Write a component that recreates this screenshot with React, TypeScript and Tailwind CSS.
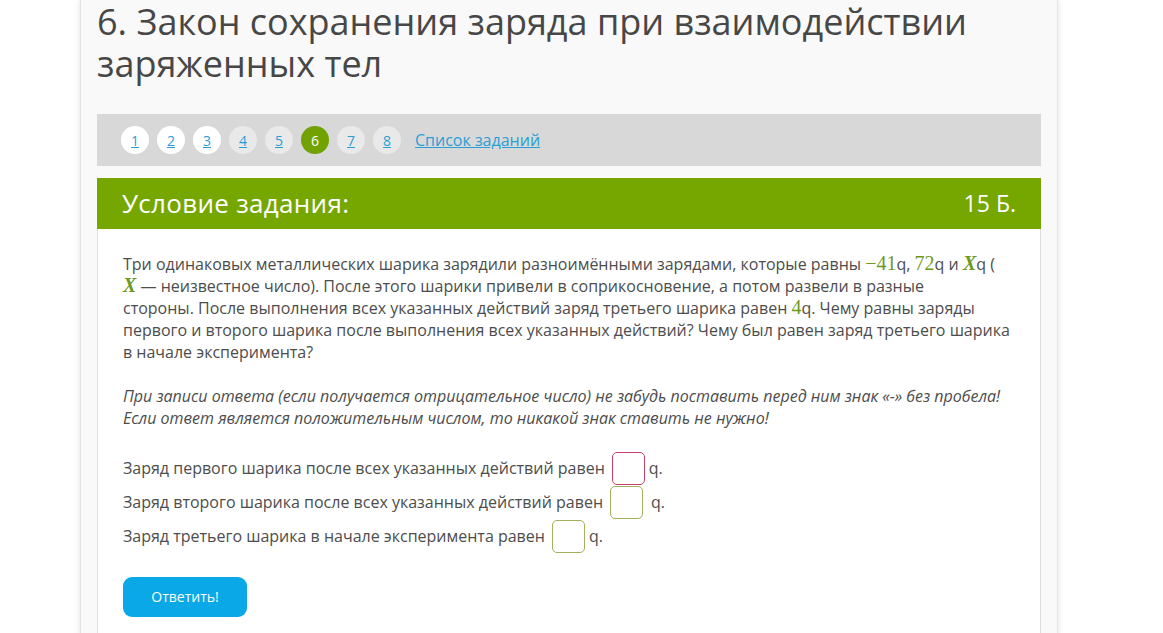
import React from 'react';

const M = ({ children, italic }: { children: React.ReactNode; italic?: boolean }) => (
  <span
    className={`text-[#6d9a1e] text-[20px] leading-[20px] ${italic ? 'italic font-bold' : ''}`}
    style={{ fontFamily: '"Liberation Serif", "DejaVu Serif", serif' }}
  >
    {children}
  </span>
);

const pages = [1, 2, 3, 4, 5, 6, 7, 8];

const AnswerRow = ({ label, border, gap }: { label: string; border: string; gap: string }) => (
  <div className="flex items-center h-[34px]">
    <span>{label}</span>
    <span className={`ml-[7px] w-[33px] h-[33px] rounded-[5px] border bg-white ${border}`} />
    <span className={gap}>q.</span>
  </div>
);

export default function App() {
  return (
    <div className="min-h-screen w-full bg-white" style={{ fontFamily: '"Open Sans", "Noto Sans", sans-serif' }}>
      <div className="ml-[80px] w-[978px] min-h-screen bg-[#f9f9f9] border-x border-[#e3e3e8] shadow-[0_0_6px_rgba(0,0,0,0.12)] px-[16px]">
        <h1 className="text-[36px] leading-[42px] text-[#474747] pt-[1px] pb-[29px]">
          6. Закон сохранения заряда при взаимодействии заряженных тел
        </h1>

        <div className="h-[52px] bg-[#d8d8d8] flex items-center pl-[24px] gap-[8px]">
          {pages.map((n) => (
            <a
              key={n}
              href="#"
              className={`w-[28px] h-[28px] rounded-full flex items-center justify-center text-[14px] ${
                n === 6
                  ? 'bg-[#72a202] text-white'
                  : n <= 3
                  ? 'bg-white text-[#2a9fd6] underline'
                  : 'bg-[#e9e9e9] text-[#2a9fd6] underline'
              }`}
            >
              {n}
            </a>
          ))}
          <a href="#" className="ml-[6px] text-[16px] text-[#2a9fd6] underline">
            Список заданий
          </a>
        </div>

        <div className="mt-[12px] h-[51px] bg-[#76a700] flex items-center justify-between px-[25px] text-white">
          <span className="text-[26px] tracking-[0.3px]">Условие задания:</span>
          <span className="text-[23px]">15 Б.</span>
        </div>

        <div className="bg-white border-x border-[#dedede] px-[25px] pt-[24px] pb-[20px] text-[16px] leading-[22px] text-[#4d4d4d]">
          <div className="whitespace-nowrap">
            <p>
              Три одинаковых металлических шарика зарядили разноимёнными зарядами, которые равны <M>−41</M>q,{' '}
              <M>72</M>q и <M italic>X</M>q (
            </p>
            <p>
              <M italic>X</M> — неизвестное число). После этого шарики привели в соприкосновение, а потом развели в
              разные
            </p>
            <p>
              стороны. После выполнения всех указанных действий заряд третьего шарика равен <M>4</M>q. Чему равны
              заряды
            </p>
            <p>
              первого и второго шарика после выполнения всех указанных действий? Чему был равен заряд третьего
              шарика
            </p>
            <p>в начале эксперимента?</p>
          </div>

          <p className="mt-[22px] italic">
            При записи ответа (если получается отрицательное число) не забудь поставить перед ним знак «-» без
            пробела!
            <br />
            Если ответ является положительным числом, то никакой знак ставить не нужно!
          </p>

          <div className="mt-[22px]">
            <AnswerRow label="Заряд первого шарика после всех указанных действий равен" border="border-[#c2416b]" gap="ml-[4px]" />
            <AnswerRow label="Заряд второго шарика после всех указанных действий равен" border="border-[#a4b060]" gap="ml-[8px]" />
            <AnswerRow label="Заряд третьего шарика в начале эксперимента равен" border="border-[#a4b060]" gap="ml-[4px]" />
          </div>

          <button className="mt-[24px] w-[124px] h-[40px] rounded-[9px] bg-[#0aa8e6] text-white text-[14px]">
            Ответить!
          </button>
        </div>
      </div>
    </div>
  );
}
